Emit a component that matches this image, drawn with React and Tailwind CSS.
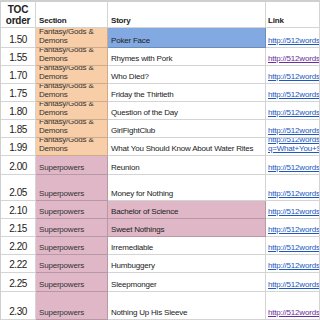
import React from 'react';

const FANTASY = 'Fantasy/Gods & Demons';
const SUPER = 'Superpowers';

const rows = [
  { n: '1.50', sec: FANTASY, story: 'Poker Face', h: 'h-[20px]', storyBg: 'bg-[#82a9e2]' },
  { n: '1.55', sec: FANTASY, story: 'Rhymes with Pork', h: 'h-[18px]', visited: true },
  { n: '1.70', sec: FANTASY, story: 'Who Died?', h: 'h-[18px]' },
  { n: '1.75', sec: FANTASY, story: 'Friday the Thirtieth', h: 'h-[18px]' },
  { n: '1.80', sec: FANTASY, story: 'Question of the Day', h: 'h-[18px]' },
  { n: '1.85', sec: FANTASY, story: 'GirlFightClub', h: 'h-[18px]' },
  { n: '1.99', sec: FANTASY, story: 'What You Should Know About Water Rites', h: 'h-[18px]', extra: 'q=What+You+Should' },
  { n: '2.00', sec: SUPER, story: 'Reunion', h: 'h-[19px]' },
  { n: '2.05', sec: SUPER, story: 'Money for Nothing', h: 'h-[26px]' },
  { n: '2.10', sec: SUPER, story: 'Bachelor of Science', h: 'h-[18px]', storyBg: 'bg-[#dfb7c7]' },
  { n: '2.15', sec: SUPER, story: 'Sweet Nothings', h: 'h-[18px]', storyBg: 'bg-[#dfb7c7]' },
  { n: '2.20', sec: SUPER, story: 'Irremediable', h: 'h-[18px]' },
  { n: '2.22', sec: SUPER, story: 'Humbuggery', h: 'h-[18px]' },
  { n: '2.25', sec: SUPER, story: 'Sleepmonger', h: 'h-[19px]' },
  { n: '2.30', sec: SUPER, story: 'Nothing Up His Sleeve', h: 'h-[28px]', visited: true },
  { n: '', sec: SUPER, story: '', h: 'h-[20px]' },
];

const cell = 'border-b border-r border-black/[0.17] overflow-hidden';

export default function App() {
  return (
    <div className="w-[320px] h-[320px] overflow-hidden bg-white font-['Liberation_Sans',Arial,sans-serif] text-[#222]">
      <div className="grid grid-cols-[35px_72px_158px_1fr] border-t-2 border-l border-[#cfcfcf]">
        {/* header */}
        <div className={`${cell} h-[26px] flex flex-col items-center justify-center text-[10px] leading-[11px] font-bold tracking-[-0.2px]`}>
          <span>TOC</span>
          <span>order</span>
        </div>
        <div className={`${cell} h-[26px] flex items-end pl-[3px] pb-[2px] text-[8px] leading-[9px] font-bold tracking-[-0.2px]`}>Section</div>
        <div className={`${cell} h-[26px] flex items-end pl-[3px] pb-[2px] text-[8px] leading-[9px] font-bold tracking-[-0.2px]`}>Story</div>
        <div className={`${cell} h-[26px] flex items-end pl-[2px] pb-[2px] text-[8px] leading-[9px] font-bold tracking-[-0.2px]`}>Link</div>

        {rows.map((r, i) => {
          const secBg = r.sec === FANTASY ? 'bg-[#f8cea8]' : 'bg-[#dfb7c7]';
          return (
            <React.Fragment key={i}>
              <div className={`${cell} ${r.h} flex items-end justify-end pr-[8px] pb-[1px] text-[10px] leading-[12px] tracking-[-0.4px]`}>
                {r.n}
              </div>
              <div className={`${cell} ${r.h} ${secBg} flex items-end pl-[3px] pb-[2px] text-[8px] leading-[9px] tracking-[-0.2px] text-[#333]`}>
                {r.sec === FANTASY ? (
                  <span className="flex flex-col">
                    <span>Fantasy/Gods &amp;</span>
                    <span>Demons</span>
                  </span>
                ) : (
                  <span>{r.sec}</span>
                )}
              </div>
              <div className={`${cell} ${r.h} ${r.storyBg || ''} flex items-end pl-[3px] pb-[2px] text-[8px] leading-[9px] tracking-[-0.2px] whitespace-nowrap`}>
                {r.story}
              </div>
              <div className={`${cell} ${r.h} flex flex-col justify-end pl-[2px] pb-[2px] text-[8px] leading-[9px] tracking-[-0.2px] whitespace-nowrap`}>
                {r.n && (
                  <span className={`underline ${r.visited ? 'text-[#6a2c9e]' : 'text-[#1c58c0]'}`}>http://512words.com/</span>
                )}
                {r.extra && <span className="underline text-[#1c58c0]">{r.extra}</span>}
              </div>
            </React.Fragment>
          );
        })}
      </div>
    </div>
  );
}
